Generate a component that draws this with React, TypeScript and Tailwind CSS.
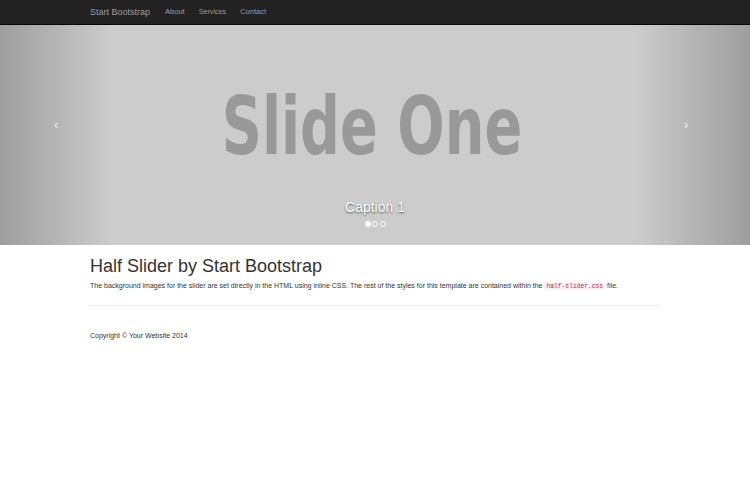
import React from "react";

export default function App() {
  return (
    <div className="w-[750px] min-h-[490px] bg-white" style={{ fontFamily: '"Liberation Sans", Arial, sans-serif' }}>
      <nav className="h-[25px] bg-[#222222] border-b border-[#080808] flex items-center">
        <div className="w-[570px] mx-auto flex items-center">
          <span className="text-[9px] text-[#9d9d9d] mr-[15px] leading-none">Start Bootstrap</span>
          <span className="text-[7.5px] text-[#9d9d9d] mr-[14px] leading-none">About</span>
          <span className="text-[7.2px] text-[#9d9d9d] mr-[14px] leading-none">Services</span>
          <span className="text-[7.5px] text-[#9d9d9d] leading-none">Contact</span>
        </div>
      </nav>
      <div className="relative h-[220px] bg-[#cccccc] overflow-hidden flex items-center justify-center">
        <div className="absolute left-0 top-0 h-full w-[112px] bg-gradient-to-r from-[#9e9e9e] to-[#cccccc]" />
        <div className="absolute right-0 top-0 h-full w-[112px] bg-gradient-to-l from-[#9e9e9e] to-[#cccccc]" />
        <div
          className="relative text-[#999999] font-bold leading-none -mt-[17px] ml-[-6px] scale-y-[1.3]"
          style={{ fontFamily: '"DejaVu Sans", sans-serif', fontSize: "62px", fontStretch: "condensed" }}
        >
          Slide One
        </div>
        <span className="absolute left-[54px] top-[93px] text-white text-[13px] leading-none opacity-80">‹</span>
        <span className="absolute left-[684px] top-[93px] text-white text-[13px] leading-none opacity-80">›</span>
        <div className="absolute left-0 right-0 top-[175px] text-center text-white text-[14px] leading-none [text-shadow:0_1px_2px_rgba(0,0,0,0.6)]">
          Caption 1
        </div>
        <div className="absolute left-0 right-0 top-[196px] flex justify-center gap-[1.5px]">
          <span className="w-[6px] h-[6px] rounded-full bg-white" />
          <span className="w-[6px] h-[6px] rounded-full border border-white" />
          <span className="w-[6px] h-[6px] rounded-full border border-white" />
        </div>
      </div>
      <div className="w-[570px] mx-auto">
        <h1 className="text-[18px] text-[#333333] leading-none mt-[12px]">Half Slider by Start Bootstrap</h1>
        <p className="text-[7px] text-[#333333] leading-[10px] mt-[6px]">
          The background images for the slider are set directly in the HTML using inline CSS. The rest of the styles for this template are contained within the{" "}
          <code className="text-[6.3px] text-[#c7254e] bg-[#f9f2f4] px-[2px] rounded-[2px]" style={{ fontFamily: '"Liberation Mono", monospace' }}>half-slider.css</code> file.
        </p>
        <hr className="border-t border-[#eeeeee] mt-[13px]" />
        <p className="text-[7px] text-[#333333] leading-[10px] mt-[25px]">Copyright © Your Website 2014</p>
      </div>
    </div>
  );
}
